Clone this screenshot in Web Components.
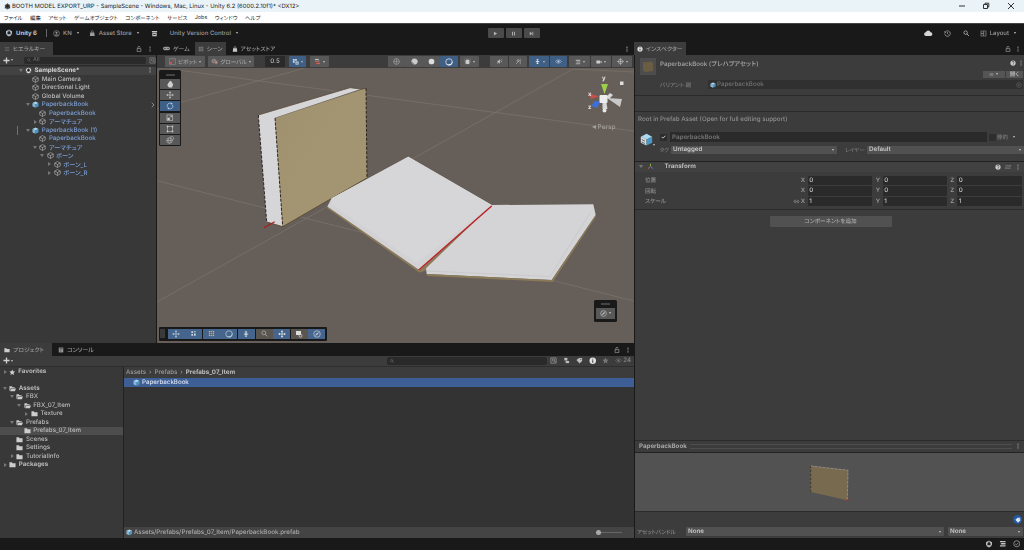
<!doctype html>
<html lang="ja"><head><meta charset="utf-8"><title>Unity</title>
<style>
html,body{margin:0;padding:0;background:#191919}
body{width:1024px;height:550px;overflow:hidden;font:500 6.2px Inter,"Noto Sans CJK JP",sans-serif;color:#bdbdbd;font-feature-settings:"palt";text-rendering:geometricPrecision}
</style></head><body>
<u-app></u-app>
<script>
const S='fill="none" stroke="currentColor"';
const ICONS={
cube:`<path d="M8 1.3 14.3 4.7v6.6L8 14.7 1.7 11.3V4.7zM1.7 4.7 8 8l6.3-3.3M8 8v6.7" ${S} stroke-width="1.4" stroke-linejoin="round"/>`,
prefab:`<path d="M8 1 15 4.5 8 8 1 4.5z" fill="#a9d8ef"/><path d="M1 4.5 8 8v7.5L1 12z" fill="#8bb9d3"/><path d="M15 4.5 8 8v7.5l7-3.5z" fill="#4c97c4"/>`,
prefabv:`<path d="M8 1 15 4.5 8 8 1 4.5z" fill="#a9d8ef"/><path d="M1 4.5 8 8v7.5L1 12z" fill="#d6dde2"/><path d="M15 4.5 8 8v7.5l7-3.5z" fill="#4c97c4"/><path d="M2 8l4 2M2 11l4 2" stroke="#444"/>`,
logo:`<path d="M8 1 14 4.5v7L8 15 2 11.5v-7z" fill="currentColor"/><path d="M8 4l3 1.8v3.6L8 11 5 9.4V5.8z" fill="#222"/><path d="M8 1v3M2 11.5l3-2M14 11.5l-3-2" stroke="#222" stroke-width="1.2"/>`,
account:`<circle cx="8" cy="8" r="6.5" ${S} stroke-width="1.4"/><circle cx="8" cy="6.5" r="2.3" fill="currentColor"/><path d="M3.5 12.5c1-3 8-3 9 0" fill="currentColor"/>`,
bag:`<path d="M3 6h10l1 9H2z" fill="currentColor"/><path d="M5.5 7V4a2.5 2.5 0 0 1 5 0v3" ${S} stroke-width="1.4"/>`,
shop:`<path d="M2 2h12v3H2zM3 6.5h10V14H3z" fill="currentColor"/><path d="M5 9h6v2H5z" fill="#191919"/>`,
cloud:`<path d="M4 13a3.5 3.5 0 0 1-.5-7A4.8 4.8 0 0 1 12.5 6 3.5 3.5 0 0 1 12 13z" fill="currentColor"/>`,
history:`<path d="M3 4.5A6.3 6.3 0 1 1 1.8 8" ${S} stroke-width="1.4"/><path d="M1 2l.5 4 4-.5z" fill="currentColor"/><path d="M8 4.5V8.5l2.5 1.5" ${S} stroke-width="1.3"/>`,
search:`<circle cx="6.5" cy="6.5" r="4.3" ${S} stroke-width="1.8"/><path d="M10 10l4.5 4.5" ${S} stroke-width="2.2"/>`,
layout:`<path d="M1.5 1.5h13v13h-13z" fill="#888"/><path d="M3 3h4.5v4.5H3zM9 3h4v10H9zM3 9h4.5v4H3z" fill="#2a2a2a"/>`,
list:`<path d="M2 3h12v1.5H2zM2 7h12v1.5H2zM2 11h12v1.5H2z" fill="currentColor"/>`,
lock:`<path d="M3 7h10v8H3z" ${S} stroke-width="1.6"/><path d="M5 7V4a3 3 0 0 1 6 0" ${S} stroke-width="1.6"/>`,
dots:`<circle cx="8" cy="3" r="1.5" fill="currentColor"/><circle cx="8" cy="8" r="1.5" fill="currentColor"/><circle cx="8" cy="13" r="1.5" fill="currentColor"/>`,
plus:`<path d="M6.5 1h3v5.5H15v3H9.5V15h-3V9.5H1v-3h5.500z" fill="currentColor"/>`,
game:`<path d="M4 4h8a4 4 0 0 1 0 8H4a4 4 0 0 1 0-8z" fill="currentColor"/><circle cx="4.5" cy="8" r="1.3" fill="#191919"/><circle cx="11.5" cy="8" r="1.3" fill="#191919"/>`,
hash:`<path d="M2 2h12v12H2z" fill="currentColor" opacity=".75"/><path d="M6 2v12M10 2v12M2 6h12M2 10h12" stroke="#333" stroke-width="1"/>`,
info:`<circle cx="8" cy="8" r="7" fill="currentColor"/><path d="M7 3.5h2v2H7zM7 7h2v5.5H7z" fill="#2d2d2d"/>`,
help:`<circle cx="8" cy="8" r="7" fill="currentColor"/><path d="M5.500 6a2.500 2.500 0 1 1 3.500 2.300V10M8 11.500v1.500" fill="none" stroke="#2d2d2d" stroke-width="1.6"/>`,
folder:`<path d="M1 3h5.5L8 5h7v9H1z" fill="currentColor"/>`,
folderopen:`<path d="M1 3h5.5L8 5h5v2H4.2L2 13H1z" fill="currentColor"/><path d="M4.8 8H16l-2.5 6H2.5z" fill="currentColor"/>`,
star:`<path d="M8 1l2.1 4.700 5 .5-3.800 3.400 1.100 5L8 12l-4.400 2.600 1.100-5L.9 6.200l5-.5z" fill="currentColor"/>`,
console:`<path d="M2 1.500h12v13H2z" fill="currentColor"/><path d="M4 4h8v1.200H4zM4 7h8v1.200H4zM4 10h5v1.200H4z" fill="#191919"/>`,
hand:`<path d="M4 8V5.500a.9.9 0 0 1 1.800 0V7.500V3.200a.9.9 0 0 1 1.800 0V7V2.500a.9.9 0 0 1 1.800 0V7V3.500a.9.9 0 0 1 1.800 0V8l.9-1.800a.9.9 0 0 1 1.500.9L11.500 14H5.500L2.200 9.500A.9.9 0 0 1 3.500 8.400z" fill="currentColor"/>`,
move:`<path d="M8 .5 10.400 3.500H5.600zM8 15.500 5.600 12.500h4.800zM.5 8 3.500 5.600v4.800zM15.500 8 12.500 10.400V5.600z" fill="currentColor"/><path d="M8 3v10M3 8h10" ${S} stroke-width="1.2"/>`,
rotate:`<path d="M3 10.500A5.500 5.500 0 0 1 11 3.300" ${S} stroke-width="1.5"/><path d="M13 5.500A5.500 5.500 0 0 1 5 12.700" ${S} stroke-width="1.5"/><path d="M10 1l3.500 2L10 5.500zM6 15l-3.500-2L6 10.500z" fill="currentColor"/>`,
scale:`<path d="M2 2h12v12H2z" ${S} stroke-width="1.2"/><path d="M3 8h5v5H3z" fill="currentColor"/><path d="M8 8l4-4M9.500 4H12v2.500" ${S} stroke-width="1.3"/>`,
rect:`<path d="M3 3h10v10H3z" ${S} stroke-width="1"/><path d="M1.500 1.500h3v3h-3zM11.500 1.500h3v3h-3zM1.500 11.500h3v3h-3zM11.500 11.500h3v3h-3z" fill="currentColor"/>`,
transform:`<circle cx="7" cy="9" r="5.500" ${S} stroke-width="1"/><ellipse cx="7" cy="9" rx="2.500" ry="5.500" ${S} stroke-width=".8"/><path d="M1.500 9h11M8 2l5-1 2 2-1 5" ${S} stroke-width="1"/>`,
pivot:`<path d="M1.500 1.500h13v13h-13z" ${S} stroke-width="1.2"/><circle cx="4.500" cy="11.500" r="2.200" fill="#e2574c"/><path d="M6 10l6-6" stroke="#e2574c" stroke-width="1.3"/>`,
globe:`<circle cx="6.500" cy="7" r="5.500" fill="#888"/><path d="M3 3l3 2-1 3 2 2-1 3" stroke="#555" fill="none"/><path d="M9 6h6v8H9z" fill="#d35a4a"/><path d="M10.500 8h3v4h-3z" fill="#8fa9b8"/>`,
snap:`<path d="M2 2h4v4H2zM7 2h4v4H7zM2 7h4v4H2z" fill="currentColor"/><path d="M8 8h7v7H8z" fill="currentColor"/><path d="M10 10h3v3h-3z" fill="#3f5f85"/>`,
snap2:`<path d="M2 2h9v3H2z" fill="currentColor"/><path d="M2 7h7v2H2z" fill="#e2574c"/><path d="M5 11h9v3H5z" fill="#e2574c"/><path d="M11 4v6" ${S}/>`,
wire:`<circle cx="8" cy="8" r="6.500" ${S} stroke-width="1.2"/><path d="M1.500 8h13M8 1.500v13" ${S} stroke-width="1"/>`,
shadeda:`<circle cx="8" cy="8" r="6.500" ${S} stroke-width="1.2"/><path d="M8 1.500a6.500 6.500 0 0 0-6.500 6.500L8 14.500a6.500 6.500 0 0 0 5-11z" fill="currentColor"/>`,
sphere:`<circle cx="8" cy="8" r="6.500" fill="currentColor"/>`,
crescent:`<circle cx="8" cy="8" r="6.500" ${S} stroke-width="1.3"/><path d="M3 11A6.500 6.500 0 0 0 14 5 6 6 0 0 1 3 11z" fill="currentColor"/>`,
bug:`<ellipse cx="8" cy="9" rx="4.500" ry="5.500" fill="currentColor"/><path d="M1 4l3 2.500M15 4l-3 2.500M1 9h3M15 9h-3M2 14l3-2M14 14l-3-2M6 3l-1-2M10 3l1-2" ${S}/>`,
noaudio:`<path d="M3 6h2.500L9 3v10l-3.500-3H3z" fill="currentColor"/><path d="M2 14 14 2M11 6l3 4M14 6l-3 4" ${S}/>`,
nofx:`<path d="M2 14 10 6M7 3l1 2 2 1-2 1-1 2-1-2-2-1 2-1zM12 2v12" ${S} stroke-width="1.3"/>`,
layers:`<path d="M8 2l3 2-3 2-3-2z M3 8l5 3 5-3-5-2z M5 12l3 2 3-2-3-1z" fill="currentColor"/>`,
eye:`<path d="M1 8c3-5 11-5 14 0-3 5-11 5-14 0z" ${S} stroke-width="1.2"/><circle cx="8" cy="8" r="2.500" fill="currentColor"/>`,
cam:`<path d="M1 4h10v8H1zM12 6.500l3-2v7l-3-2z" fill="currentColor"/>`,
gizmo:`<circle cx="8" cy="8" r="5" ${S} stroke-width="1.3"/><path d="M8 0v16M0 8h16" ${S} stroke-width="1.1"/><circle cx="8" cy="8" r="1.600" fill="currentColor"/>`,
cam2:`<path d="M2 2h10v8H2z" fill="currentColor"/><circle cx="11" cy="11.500" r="3" ${S} stroke-width="1.4"/>`,
compass:`<circle cx="8" cy="8" r="6.500" ${S} stroke-width="1.4"/><path d="M12 4 9.200 9.200 4 12l2.800-5.200z" fill="currentColor"/>`,
nodes:`<path d="M3 3h4v4H3zM9 3h4v2H9zM3 9h4v4H3zM9 8h4v5H9z" fill="currentColor"/>`,
lines:`<path d="M2 2h12v3H2zM4 6.500h10v3H4zM2 11h12v3H2z" fill="currentColor"/>`,
mag:`<circle cx="6.500" cy="6.500" r="4.500" ${S} stroke-width="1.5"/><path d="M10 10l4.500 4.500" ${S} stroke-width="1.8"/>`,
searchbox:`<path d="M2 2h12v12H2z" ${S} stroke-width="1.2"/><circle cx="8" cy="7" r="2.700" ${S} stroke-width="1.2"/><path d="M10 9l3 3" ${S} stroke-width="1.4"/>`,
people:`<path d="M3 2h7v6H3z" fill="currentColor"/><path d="M6 9h8v5H6z" fill="currentColor"/>`,
tag:`<path d="M1 7 7 2h7v7l-6 6z" fill="currentColor"/><circle cx="11" cy="5" r="1.200" fill="#333"/>`,
check:`<circle cx="8" cy="8" r="6.500" ${S} stroke-width="1.3"/><path d="M4.800 8.300 7.200 10.600 11.300 5.800" ${S} stroke-width="1.3"/>`,
axes:`<path d="M8 8V2" stroke="#8cc63f" stroke-width="2"/><path d="M8 8 2 13" stroke="#e2574c" stroke-width="2"/><path d="M8 8l6 5" stroke="#4e86d8" stroke-width="2"/>`,
sliders:`<path d="M1 5h12M13 2.500 15.500 5 13 7.500M15 11H3M3 8.500.5 11 3 13.500" ${S} stroke-width="1.5"/>`,
link:`<path d="M7 5.500a3 3 0 1 0 0 5M9 5.500a3 3 0 1 1 0 5M5 8h6" ${S} stroke-width="1.4"/>`,
target:`<circle cx="8" cy="8" r="6.500" ${S} stroke-width="1.2"/><circle cx="8" cy="8" r="2" fill="currentColor"/>`,
play:`<path d="M3 2l10 6-10 6z" fill="currentColor"/>`,
pause:`<path d="M3.500 2h3v12h-3zM9.500 2h3v12h-3z" fill="currentColor"/>`,
step:`<path d="M2.500 2l8 6-8 6zM11 2h2.500v12H11z" fill="currentColor"/>`
};
function def(name,html){customElements.define(name,class extends HTMLElement{
 connectedCallback(){ if(this.shadowRoot) return; const r=this.attachShadow({mode:'open'}); r.innerHTML=typeof html==='function'?html(this):html;} });}
const A=(el,n,d='')=>el.getAttribute(n)??d;

def('u-icon',e=>{const s=A(e,'size','7');return `<style>:host{display:inline-flex;flex:none;width:${s}px;height:${s}px;color:${A(e,'color','inherit')}}svg{width:100%;height:100%;display:block}</style><svg viewBox="0 0 16 16">${ICONS[A(e,'name')]||''}</svg>`});

def('u-caret',e=>`<style>:host{display:inline-block;flex:none;width:0;height:0;border-left:${A(e,'s','1.8')}px solid transparent;border-right:${A(e,'s','1.8')}px solid transparent;border-top:${+A(e,'s','1.8')*1.15}px solid ${A(e,'color','#c4c4c4')}}</style>`);

def('u-titlebar',`<style>:host{display:flex;align-items:center;height:12px;background:#eaf3f8;color:#222;font-size:5.9px;font-weight:400;padding-left:4px;box-sizing:border-box}
.t{margin-left:1px;flex:1;white-space:nowrap}.w{display:flex;gap:0;margin-right:1px;color:#333}.w span{width:24.5px;display:flex;justify-content:center}</style>
<u-icon name="logo" size="7" color="#555"></u-icon><span class="t">BOOTH MODEL EXPORT_URP - SampleScene - Windows, Mac, Linux - Unity 6.2 (6000.2.10f1)* &lt;DX12&gt;</span>
<div class="w"><span><svg width="8" height="8" viewBox="0 0 8 8"><path d="M1 4h6" stroke="#333"/></svg></span><span><svg width="8" height="8" viewBox="0 0 8 8"><path d="M1.500 2.500h4v4h-4zM3 2.500V1.200h3.800V5H5.500" fill="none" stroke="#333"/></svg></span><span><svg width="8" height="8" viewBox="0 0 8 8"><path d="M1 1l6 6M7 1 1 7" stroke="#333"/></svg></span></div>`);

def('u-menubar',`<style>:host{display:flex;align-items:center;gap:7.4px;height:11px;background:#fff;color:#222;font-size:5.4px;font-weight:400;padding-left:4px;box-sizing:border-box}</style>
<span>ファイル</span><span>編集</span><span>アセット</span><span>ゲームオブジェクト</span><span>コンポーネント</span><span>サービス</span><span>Jobs</span><span>ウィンドウ</span><span>ヘルプ</span>`);

def('u-toolbar',`<style>:host{display:grid;grid-template-columns:1fr auto 1fr;align-items:center;height:19px;background:#191919;color:#9d9d9d;font-size:6px;box-sizing:border-box;border-top:1px solid #444}
.l,.r{display:flex;align-items:center}.l{padding-left:5px}.r{justify-content:flex-end;padding-right:8px}
b{color:#c8c8c8;font-weight:700;margin-left:3px}.sep{width:1px;height:8px;background:#666;margin:0 6px 0 9px}
.i{display:flex;align-items:center;gap:3px}.i u-caret{margin-left:2px}
.c{display:flex;gap:2px;margin-left:3px}.c span{width:16px;height:10.5px;background:#4a4a4a;display:flex;align-items:center;justify-content:center;color:#b5b5b5;border-radius:1px}</style>
<div class="l"><u-icon name="logo" size="8" color="#b5c0cc"></u-icon><b>Unity 6</b><span class="sep"></span>
<span class="i"><u-icon name="account" size="7"></u-icon>KN<u-caret></u-caret></span>
<span class="i" style="margin-left:10.5px"><u-icon name="bag" size="6.5"></u-icon>Asset Store<u-caret></u-caret></span>
<u-icon name="shop" size="7" style="margin-left:12px" color="#c8c8c8"></u-icon>
<span class="i" style="margin-left:12px">Unity Version Control<u-caret></u-caret></span></div>
<div class="c"><span><u-icon name="play" size="5"></u-icon></span><span><u-icon name="pause" size="5"></u-icon></span><span><u-icon name="step" size="5"></u-icon></span></div>
<div class="r"><u-icon name="cloud" size="8.5" color="#d6d6d6"></u-icon><u-icon name="history" size="7" style="margin-left:11px" color="#c0c0c0"></u-icon><u-icon name="search" size="6.5" style="margin-left:12.5px" color="#c0c0c0"></u-icon><u-icon name="layout" size="7" style="margin-left:10px"></u-icon><span class="i" style="margin-left:3px">Layout<u-caret></u-caret></span></div>`);

def('u-tab',e=>`<style>:host{display:flex;align-items:center;gap:3px;height:100%;padding:0 ${A(e,'pr',A(e,'pad','5'))}px 0 ${A(e,'pad','5')}px;box-sizing:border-box;font-size:5.8px;color:#9a9a9a;flex:none;${e.hasAttribute('active')?'background:#3c3c3c;':''}}</style><slot></slot>`);

def('u-tabbar',`<style>:host{display:flex;align-items:stretch;height:13px;background:#191919;color:#aaa;flex:none}.e{margin-left:auto;display:flex;align-items:center;gap:3px;padding-right:3px}</style><slot></slot><div class="e"><slot name="end"></slot></div>`);

def('u-row',e=>{const d=+A(e,'d','0'),a=A(e,'a'),base=+A(e,'base','34.7')+d*7.2,ic=A(e,'icon','cube');
 const arrow=a?(a==='d'?`<i style="border-left:2.1px solid transparent;border-right:2.1px solid transparent;border-top:3.5px solid #777"></i>`:`<i style="border-top:2.1px solid transparent;border-bottom:2.1px solid transparent;border-left:3.5px solid #777"></i>`):'';
 return `<style>:host{display:flex;align-items:center;height:8.5px;color:${A(e,'color','inherit')};white-space:nowrap}
 .a{width:6px;margin-left:${base-17}px;display:flex;justify-content:center;flex:none}i{display:block}
 .t{margin-left:2.5px}${e.hasAttribute('bold')?'.t{font-weight:700}':''}</style>
 <span class="a">${arrow}</span><u-icon name="${ic}" size="${A(e,'size','7')}" style="margin-left:1.3px;color:${A(e,'ic','#b9b9b9')}"></u-icon><span class="t"><slot></slot></span>`});

def('u-hierarchy',`<style>:host{display:flex;flex-direction:column;width:156px;background:#383838;flex:none;border-right:1px solid #191919;position:relative;color:#bdbdbd}
.b{display:flex;align-items:center;height:11px;background:#3c3c3c;padding-left:3px;gap:1px;box-sizing:border-box;flex:none;border-bottom:1px solid #2a2a2a}
.s{margin-left:10px;width:130px;height:7px;background:#2a2a2a;border-radius:2px;display:flex;align-items:center;padding-left:3px;color:#666;font-size:5.5px;box-sizing:border-box;gap:2px}
.ind{position:absolute;left:17px;top:84px;width:1px;height:9px;background:#2c82c4}</style>
<u-tabbar><u-tab active pad="4" pr="8"><u-icon name="list" size="6" color="#777"></u-icon>ヒエラルキー</u-tab><u-icon slot="end" name="lock" size="6" color="#b0b0b0"></u-icon><u-icon slot="end" name="dots" size="6" color="#b0b0b0" style="margin-left:2px"></u-icon></u-tabbar>
<div class="b"><u-icon name="plus" size="7" color="#d0d0d0"></u-icon><u-caret></u-caret><div class="s"><u-icon name="search" size="4" color="#777"></u-icon>All</div><u-icon name="searchbox" size="7" color="#999" style="margin-left:2px"></u-icon></div>
<div style="padding-top:.5px">
<u-row a="d" icon="logo" bold style="background:#424242;color:#d2d2d2" ic="#d8d8d8">SampleScene*</u-row>
<u-row d="1">Main Camera</u-row>
<u-row d="1">Directional Light</u-row>
<u-row d="1">Global Volume</u-row>
<u-row d="1" a="d" icon="prefab" color="#7c9fd4">PaperbackBook</u-row>
<u-row d="2" color="#7c9fd4">PaperbackBook</u-row>
<u-row d="2" a="r" color="#7c9fd4">アーマチュア</u-row>
<u-row d="1" a="d" icon="prefab" color="#7c9fd4">PaperbackBook (1)</u-row>
<u-row d="2" color="#7c9fd4">PaperbackBook</u-row>
<u-row d="2" a="d" color="#7c9fd4">アーマチュア</u-row>
<u-row d="3" a="d" color="#7c9fd4">ボーン</u-row>
<u-row d="4" a="r" color="#7c9fd4">ボーン_L</u-row>
<u-row d="4" a="r" color="#7c9fd4">ボーン_R</u-row>
</div><span class="ind"></span>
<svg style="position:absolute;left:151px;top:60px" width="4" height="6" viewBox="0 0 4 6"><path d="M.7.7 3 3 .7 5.3" fill="none" stroke="#888"/></svg>
<u-icon name="dots" size="6" color="#c0c0c0" style="position:absolute;left:147px;top:25px"></u-icon>`);

def('u-tb',e=>{const b=e.hasAttribute('blue'),ar=e.hasAttribute('arrow');return `<style>:host{display:flex;align-items:center;justify-content:center;gap:2px;height:10.5px;width:${A(e,'w','18')}px;background:${b?'#3f5f85':'#585858'};flex:none;box-sizing:border-box;border-radius:1px;font-size:5.6px;color:#a0a0a0;white-space:nowrap}</style><slot></slot>${ar?'<u-caret color="#bbb"></u-caret>':''}`});

def('u-scene',`<style>:host{display:flex;flex-direction:column;flex:1;min-width:0;background:#191919;position:relative}
.bar{display:flex;align-items:center;height:13px;background:#3c3c3c;flex:none;padding-left:8px;padding-right:2px;box-sizing:border-box;color:#cfcfcf}
.g{display:flex;align-items:center}
.vp{flex:1;position:relative;background:#665f59;overflow:hidden}
svg.world{display:block;width:100%;height:100%}
.tools{position:absolute;left:2px;top:2px;width:22px;display:flex;flex-direction:column;align-items:center;gap:1.3px;background:#191919;padding:1px 0;border-radius:1.5px;box-sizing:border-box}
.h{width:9px;height:2px;margin:3px 0 1.5px;background:#444}
.t{width:20px;height:10px;background:#585858;display:flex;align-items:center;justify-content:center;color:#d0d0d0}.t.on{background:#3f5f85;color:#a8d0ff}
.bot{position:absolute;left:1.5px;bottom:2.5px;height:13.5px;display:flex;align-items:center;gap:.6px;background:#191919;padding:0 1.5px;border-radius:1px;box-sizing:border-box}
.bot i{display:block;width:5px;height:9px;background:#3a3a3a;margin-right:2px}
.bot .t{width:17px;height:10.5px;background:#46658c;color:#c8d4de}.bot .t.off{background:#5b5550;color:#bbb}
.cor{position:absolute;left:437px;top:231.5px;width:23px;height:22.5px;background:#191919;border-radius:1.5px;display:flex;flex-direction:column;align-items:center;box-sizing:border-box;padding-top:3.5px}
.cor .h{margin:0 0 3px;height:2px;width:9px}
.cor .t{width:19px;height:10.5px;gap:2px}
.p{position:absolute;left:435px;top:55px;font-size:6.5px;color:#a5a19d;display:flex;gap:1.5px;align-items:center}
.p i{display:block;border-top:2.2px solid transparent;border-bottom:2.2px solid transparent;border-right:4px solid #a5a19d}
.lbl{position:absolute;font-size:6px;font-weight:700;color:#e4e4e4}</style>
<u-tabbar>
<u-tab pad="3" style="margin-left:3px"><u-icon name="game" size="7"></u-icon>ゲーム</u-tab>
<u-tab active pad="3" style="margin-left:2px"><u-icon name="hash" size="6"></u-icon>シーン</u-tab>
<u-tab pad="3" style="margin-left:3px"><u-icon name="bag" size="6" color="#c8c8c8"></u-icon>アセットストア</u-tab>
<u-icon slot="end" name="dots" size="6" style="margin-right:1px;color:#c4c4c4"></u-icon>
</u-tabbar>
<div class="bar">
<u-tb w="40" arrow><u-icon name="pivot" size="7"></u-icon>ピボット</u-tb>
<u-tb w="46" arrow style="margin-left:3px"><u-icon name="globe" size="7"></u-icon>グローバル</u-tb>
<u-tb w="20" style="margin-left:11px;background:#2a2a2a;color:#bbb;font-size:6.2px">0.5</u-tb>
<u-tb w="17" blue arrow style="margin-left:4px"><u-icon name="snap" size="7" color="#cfdcea"></u-icon></u-tb>
<u-tb w="19" arrow style="margin-left:4px"><u-icon name="snap2" size="7" color="#bbb"></u-icon></u-tb>
<div class="g" style="margin-left:auto">
<u-tb w="17"><u-icon name="wire" size="7" color="#bbb"></u-icon></u-tb><u-tb w="18"><u-icon name="shadeda" size="7" color="#ccc"></u-icon></u-tb><u-tb w="17"><u-icon name="sphere" size="7" color="#ddd"></u-icon></u-tb><u-tb w="18" blue><u-icon name="crescent" size="8" color="#fff"></u-icon></u-tb><u-tb w="19" arrow style="margin-left:2px"><u-icon name="bug" size="7" color="#ccc"></u-icon></u-tb>
<u-tb w="18" style="margin-left:11px"><u-icon name="noaudio" size="7" color="#bbb"></u-icon></u-tb><u-tb w="18" style="margin-left:1px"><u-icon name="nofx" size="7" color="#bbb"></u-icon></u-tb>
<u-tb w="20" blue arrow style="margin-left:2px"><u-icon name="layers" size="7" color="#d8e4f0"></u-icon></u-tb><u-tb w="17" blue style="margin-left:1px"><u-icon name="eye" size="7" color="#c4d4e8"></u-icon></u-tb>
<u-tb w="21" arrow style="margin-left:2px"><u-icon name="lines" size="6" color="#aaa"></u-icon></u-tb><u-tb w="20" arrow style="margin-left:1px"><u-icon name="cam" size="6" color="#ccc"></u-icon></u-tb><u-tb w="20" arrow style="margin-left:1px"><u-icon name="gizmo" size="7" color="#ccc"></u-icon></u-tb>
</div></div>
<div class="vp">
<svg class="world" viewBox="157 68 477 275" preserveAspectRatio="none">
<g stroke="#7b756d" stroke-width=".7" fill="none">
<path d="M157 109 305 68M170 69 634 131M158 181 634 301M157 302 573 69M573 69 634 72"/>
</g>
<path d="M258.3 115 350 87.7 360.7 89 275 117.7 282.7 226.7 266.7 222z" fill="#d6d6d8"/>
<path d="M275 118 366 88.3 367 178 282.7 226.7z" fill="#a49572"/>
<path d="M275 118 366 88.3 367 178 282.7 226.7z" fill="url(#cov)"/>
<path d="M258.3 115 350 87.7 360.7 89 366 88.3" fill="none" stroke="#5a4e3a" stroke-width=".8"/>
<path d="M258.3 115 266.7 222M275 118 282.7 226.7M366 88.3 367 178" fill="none" stroke="#1d1a16" stroke-width=".9" stroke-dasharray="3 1.5"/>
<path d="M367 178 282.7 226.7 266.7 222" fill="none" stroke="#5a4e3a" stroke-width="1"/>
<path d="M264 227.7 274.7 221.7" stroke="#a81c1c" stroke-width="1.2"/>
<path d="M327.3 208.3 419.300 272.5 425 271 491.7 205 408.3 156.7 331.7 198.3z" fill="#8b7a5a"/>
<path d="M327.3 206.5 419.3 270 491.7 205 408.3 156.7 331.7 198.3z" fill="#d2d2d4"/>
<path d="M331 204 417 263 491.7 205 408.3 156.7 331.7 198.3z" fill="#d6d6d8"/>
<path d="M426 268.3 491.7 205 593.3 204.3 595.7 215 551.7 280 426.7 274z" fill="#d4d4d6"/>
<path d="M426.7 274 551.7 280 595.7 215 595.7 217 552.7 282 427 276z" fill="#8a7a58"/>
<path d="M427 271 550 276.5 590 213" fill="none" stroke="#c6c6c8" stroke-width=".8"/>
<path d="M491.7 206 418.7 270" stroke="#c01f26" stroke-width="1.3"/>
<path d="M601 84h7l-3.500 10z" fill="#9dcf4a"/>
<path d="M589 93.5 599 96.5 591 99z" fill="#c8504a"/>
<path d="M594 101.5 600.5 101 597 108 591.5 106z" fill="#3d6fd8"/>
<path d="M607 98 622 99 620 107z" fill="#c8c8c8"/>
<path d="M606 97 610 93l3 2-4 4z" fill="#d8d8d8"/>
<path d="M602.5 103h4l1 6h-5z" fill="#d8d8d8"/>
<circle cx="604.5" cy="110.5" r="2" fill="#e8e8e8"/>
<rect x="599.5" y="95" width="8" height="8" rx="1" fill="#ececec"/>
<path d="M620 81.500h3.500v3.500H620z" fill="#ddd"/>
<defs><linearGradient id="cov" x1="0" y1="0" x2="1" y2="1"><stop offset="0" stop-color="#8c7f64" stop-opacity=".35"/><stop offset=".6" stop-color="#a49470" stop-opacity="0"/></linearGradient></defs>
</svg>
<span class="lbl" style="left:445px;top:7px">y</span><span class="lbl" style="left:431px;top:23px">x</span><span class="lbl" style="left:431px;top:36px">z</span>
<div class="p"><i></i>Persp</div>
<div class="tools"><div class="h"></div>
<div class="t"><u-icon name="hand" size="8.5"></u-icon></div><div class="t"><u-icon name="move" size="8"></u-icon></div><div class="t on"><u-icon name="rotate" size="8"></u-icon></div><div class="t"><u-icon name="scale" size="7.5"></u-icon></div><div class="t"><u-icon name="rect" size="8"></u-icon></div><div class="t"><u-icon name="transform" size="8"></u-icon></div></div>
<div class="bot"><i></i>
<div class="t"><u-icon name="move" size="8"></u-icon></div><div class="t"><u-icon name="nodes" size="7"></u-icon></div><div class="t"><u-icon name="hash" size="7"></u-icon></div><div class="t"><u-icon name="crescent" size="8"></u-icon></div><div class="t"><u-icon name="layers" size="8"></u-icon></div><div class="t off"><u-icon name="mag" size="7"></u-icon></div><div class="t"><u-icon name="move" size="8" color="#fff"></u-icon></div><div class="t off"><u-icon name="cam2" size="8" color="#ddd"></u-icon></div><div class="t"><u-icon name="compass" size="8"></u-icon></div></div>
<div class="cor"><div class="h"></div><div class="t"><u-icon name="compass" size="7"></u-icon><u-caret></u-caret></div></div>
</div>`);

def('u-project',`<style>:host{display:flex;flex-direction:column;height:195px;flex:none;background:#333;color:#b8b8b8;position:relative}
.bar{display:flex;align-items:center;height:10.5px;background:#3c3c3c;flex:none;padding-left:3px;color:#c4c4c4;box-sizing:border-box;border-bottom:1px solid #2e2e2e}
.s{margin-left:auto;width:160px;height:7.5px;background:#2a2a2a;border-radius:2px;display:flex;align-items:center;padding-left:3px;box-sizing:border-box}
.e{display:flex;align-items:center;padding-right:3px;gap:6px;margin-left:3px;color:#bdbdbd}
.body{display:flex;flex:1;min-height:0}
.tree{width:123px;flex:none;border-right:1px solid #222;background:#383838;padding-top:1px}
.gap{height:8px}
.main{flex:1;display:flex;flex-direction:column;min-width:0}
.crumb{display:flex;align-items:center;gap:3px;height:11.5px;background:#3c3c3c;padding-left:2px;color:#9a9a9a;box-sizing:border-box;flex:none;padding-top:1px}.crumb b{font-weight:700;color:#bdbdbd}
.list{flex:1}.sel{display:flex;align-items:center;height:9px;background:#3e5f96;color:#d8e2f2;padding-left:9px;gap:2px}
.foot{display:flex;align-items:center;height:11px;background:#444;padding-left:2px;gap:1.5px;color:#a8a8a8;font-size:6.2px;flex:none;position:relative}
.sl{position:absolute;left:472px;top:4.5px;width:26px;height:1px;background:#666}
.sl i{position:absolute;left:0;top:-2px;width:5px;height:5px;border-radius:50%;background:#aaa}</style>
<u-tabbar><u-tab active pad="4" pr="8"><u-icon name="folder" size="6" color="#ccc"></u-icon>プロジェクト</u-tab><u-tab pad="3" style="margin-left:3px"><u-icon name="console" size="6"></u-icon>コンソール</u-tab><u-icon slot="end" name="lock" size="6" color="#b0b0b0"></u-icon><u-icon slot="end" name="dots" size="6" color="#b0b0b0" style="margin-left:2px"></u-icon></u-tabbar>
<div class="bar"><u-icon name="plus" size="7" color="#d0d0d0"></u-icon><u-caret style="margin-left:1px"></u-caret><div class="s"><u-icon name="search" size="4" color="#888"></u-icon></div>
<div class="e"><u-icon name="searchbox" size="7"></u-icon><u-icon name="people" size="7"></u-icon><u-icon name="tag" size="7"></u-icon><u-icon name="info" size="7.5" color="#e0e0e0"></u-icon><u-icon name="star" size="7" color="#777"></u-icon><span style="display:flex;align-items:center;gap:1px;color:#888"><u-icon name="eye" size="7" color="#777"></u-icon>24</span></div></div>
<div class="body"><div class="tree">
<u-row base="19" a="r" icon="star" bold size="6.5" ic="#ccc">Favorites</u-row><div class="gap"></div>
<u-row base="19" a="d" icon="folderopen" bold ic="#ccc">Assets</u-row>
<u-row base="19" d="1" a="d" icon="folderopen" ic="#ccc">FBX</u-row>
<u-row base="19" d="2" a="d" icon="folderopen" ic="#ccc">FBX_07_Item</u-row>
<u-row base="19" d="3" a="r" icon="folder" ic="#ccc">Texture</u-row>
<u-row base="19" d="1" a="d" icon="folderopen" ic="#ccc">Prefabs</u-row>
<u-row base="19" d="2" icon="folder" ic="#ccc" style="background:#4d4d4d">Prefabs_07_Item</u-row>
<u-row base="19" d="1" icon="folder" ic="#ccc">Scenes</u-row>
<u-row base="19" d="1" icon="folder" ic="#ccc">Settings</u-row>
<u-row base="19" d="1" a="r" icon="folder" ic="#ccc">TutorialInfo</u-row>
<u-row base="19" a="r" icon="folder" bold ic="#ccc">Packages</u-row>
</div><div class="main">
<div class="crumb">Assets<span>&#8250;</span>Prefabs<span>&#8250;</span><b>Prefabs_07_Item</b></div>
<div class="list"><div class="sel"><u-icon name="prefab" size="7"></u-icon>PaperbackBook</div></div>
<div class="foot"><u-icon name="prefab" size="6.5"></u-icon>Assets/Prefabs/Prefabs_07_Item/PaperbackBook.prefab<div class="sl"><i></i></div></div>
</div></div>`);

def('u-drop',`<style>:host{display:flex;align-items:center;justify-content:space-between;height:8.5px;background:#515151;border-radius:1px;padding:0 3px 0 2px;box-sizing:border-box;color:#c6c6c6;font-size:6.2px;font-weight:600;min-width:0}</style><slot></slot><u-caret></u-caret>`);
def('u-num',`<style>:host{display:flex;align-items:center;height:9.5px;background:#2a2a2a;border-radius:1px;padding-left:1.5px;box-sizing:border-box;color:#c8c8c8;font-size:6.2px;min-width:0}</style><slot></slot>`);

def('u-inspector',`<style>:host{display:flex;flex-direction:column;flex:1;min-width:0;background:#191919;font-size:6.2px;color:#a0a0a0}
.body{flex:1;display:flex;flex-direction:column;background:#3c3c3c;min-height:0;border-left:1px solid #191919}
.hd{height:41px;flex:none;background:#3c3c3c;border-bottom:1px solid #2a2a2a;display:grid;grid-template-columns:22px 1fr;box-sizing:border-box}
.thumb{width:16px;height:17px;background:#4d4d4d;margin:3px 0 0 5px;display:flex;align-items:center;justify-content:center}
.ht{padding-top:4px;display:flex;flex-direction:column;min-width:0}
.ht .a{display:flex;align-items:center;color:#9a9a9a;font-size:6.2px;font-weight:600;padding-left:3px;height:8px;white-space:nowrap}
.ht .b{display:flex;justify-content:flex-end;margin-top:3.7px;padding-right:1px}
.btn{height:7.5px;background:#555;display:flex;align-items:center;justify-content:center;color:#999;font-size:5.6px;gap:2px}
.var{display:flex;align-items:center;margin-top:1.8px;height:9.5px;font-size:5.6px;color:#7a7a7a;padding-right:1px}
.var>span{width:51px;padding-left:3px;box-sizing:border-box;white-space:nowrap;flex:none}
.varf{flex:1;height:9.5px;background:#303030;display:flex;align-items:center;padding-left:2px;gap:1px;color:#717171;font-size:6.2px;border-radius:1px}
.strip{height:16px;border-bottom:1px solid #2a2a2a;box-sizing:border-box;flex:none}
.note{height:15px;display:flex;align-items:center;padding-left:3px;color:#8f8f8f;font-size:6.2px;flex:none;border-bottom:0;box-sizing:border-box}
.go{height:34.5px;flex:none;display:grid;grid-template-columns:24px 1fr;box-sizing:border-box;padding-top:5px;border-bottom:1px solid #222}
.gi{padding:1px 0 0 5px;position:relative}
.l1{display:flex;align-items:center;height:10px}
.ck{width:7px;height:7px;background:#2b2b2b;color:#ddd;display:flex;align-items:center;justify-content:center;flex:none;font-size:6px;border-radius:1px}
.name{width:317.5px;flex:none;height:9.7px;margin-left:2.5px;background:#2a2a2a;display:flex;align-items:center;padding-left:2.5px;color:#6f6f6f;font-weight:700;box-sizing:border-box;font-size:6.2px}
.st{display:flex;align-items:center;margin-left:1.5px;gap:2px;color:#777;font-size:5.6px}
.l2{display:flex;align-items:center;height:8.5px;margin-top:3.5px;font-size:5.4px;color:#777}
.tr{height:10.5px;display:flex;align-items:center;flex:none;background:#414141;padding-left:3px;font-weight:700;color:#bdbdbd}
.rows{padding:3px 2.3px 0 10px;height:38px;box-sizing:border-box;border-bottom:1px solid #2a2a2a;flex:none}
.rw{display:grid;grid-template-columns:1fr 8px 7px 64px 4px 7px 64.5px 3px 7px 64.5px;align-items:center;height:10.5px;color:#8e8e8e;font-size:5.6px}
.rw span.x{color:#9b9b9b;font-size:6px;font-weight:600}
.add{width:122px;height:11px;background:#515151;margin:5.5px 0 0 134.5px;display:flex;align-items:center;justify-content:center;font-size:5.6px;color:#aaa;flex:none;border-radius:1px}
.sp{flex:1}
.ph{height:10.5px;display:flex;align-items:center;flex:none;background:#3c3c3c;padding:0 3px 0 4px;color:#a5a5a5;font-weight:700;border-top:1px solid #2b2b2b;font-size:6.2px;gap:3px}
.ph i{flex:1;height:3px;border-top:1px solid #4d4d4d;border-bottom:1px solid #4d4d4d}
.pv{height:58.5px;flex:none;background:#525252;overflow:hidden;border-top:.5px solid #222}
.pv svg{display:block;width:100%;height:100%}
.bt{height:27px;flex:none;display:flex;flex-direction:column;justify-content:flex-end;border-top:1px solid #2b2b2b;box-sizing:border-box;padding:0 1.5px 2px 2px;position:relative}
.bb{display:grid;grid-template-columns:49px 258px 4px 1fr;align-items:center;height:9px;font-size:5.5px;color:#858585}
.tagb{position:absolute;right:2px;top:3px;width:9px;height:9px;border-radius:50%;background:#23589e;display:flex;align-items:center;justify-content:center}
</style>
<u-tabbar><u-tab active pad="3"><u-icon name="info" size="6" color="#ddd"></u-icon>インスペクター</u-tab><u-icon slot="end" name="lock" size="6" color="#b0b0b0"></u-icon><u-icon slot="end" name="dots" size="6" color="#b0b0b0" style="margin-left:1px"></u-icon></u-tabbar>
<div class="body">
<div class="hd"><div class="thumb"><svg width="12" height="11" viewBox="0 0 12 11"><path d="M1 1.5 9 .5l2 1.5v8L3 11 1 9.5z" fill="#6a5d42"/></svg></div>
<div class="ht"><div class="a">PaperbackBook (プレハブアセット)<u-icon name="help" size="6" color="#ccc" style="margin-left:auto;margin-right:2px"></u-icon><u-icon name="dots" size="6" color="#aaa"></u-icon></div>
<div class="b"><div class="btn" style="width:22px"><u-icon name="list" size="5"></u-icon><u-caret></u-caret></div><div class="btn" style="width:17px;margin-left:1.5px;color:#bbb">開く</div></div>
<div class="var"><span>バリアント 親</span><div class="varf"><u-icon name="prefab" size="6"></u-icon>PaperbackBook<u-icon name="target" size="6" color="#777" style="margin-left:auto;margin-right:1px"></u-icon></div></div>
</div></div>
<div class="strip"></div>
<div class="note">Root in Prefab Asset (Open for full editing support)</div>
<div class="go"><div class="gi"><u-icon name="prefabv" size="13"></u-icon><u-caret style="position:absolute;left:18px;top:12px"></u-caret></div>
<div><div class="l1"><div class="ck" style="margin-left:1px">✓</div><div class="name">PaperbackBook</div><div class="ck" style="margin-left:1.5px;background:#2e2e2e"></div><div class="st">静的<u-caret style="margin-left:3px"></u-caret></div></div>
<div class="l2"><span style="width:11px;margin-left:-1px;text-align:right">タグ</span><u-drop style="width:166px;margin-left:2px">Untagged</u-drop><span style="margin-left:8px;width:22px">レイヤー</span><u-drop style="width:156.5px">Default</u-drop></div></div></div>
<div class="tr"><i style="display:block;border-left:2.1px solid transparent;border-right:2.1px solid transparent;border-top:3.5px solid #777;margin-right:4px;margin-left:.5px"></i><u-icon name="axes" size="7"></u-icon><span style="margin-left:11px">Transform</span><span style="margin-left:auto;display:flex;gap:4px;align-items:center;padding-right:3px"><u-icon name="help" size="6" color="#ccc"></u-icon><u-icon name="sliders" size="6" color="#aaa"></u-icon><u-icon name="dots" size="6" color="#aaa"></u-icon></span></div>
<div class="rows">
<div class="rw"><span>位置</span><span></span><span class="x">X</span><u-num>0</u-num><span></span><span class="x">Y</span><u-num>0</u-num><span></span><span class="x">Z</span><u-num>0</u-num></div>
<div class="rw"><span>回転</span><span></span><span class="x">X</span><u-num>0</u-num><span></span><span class="x">Y</span><u-num>0</u-num><span></span><span class="x">Z</span><u-num>0</u-num></div>
<div class="rw"><span>スケール</span><u-icon name="link" size="7" color="#999"></u-icon><span class="x">X</span><u-num>1</u-num><span></span><span class="x">Y</span><u-num>1</u-num><span></span><span class="x">Z</span><u-num>1</u-num></div>
</div>
<div class="add">コンポーネントを追加</div>
<div class="sp"></div>
<div class="ph">PaperbackBook<i></i><u-icon name="dots" size="6" color="#aaa"></u-icon></div>
<div class="pv"><svg viewBox="635 453 389 58"><path d="M810.7 465.7 848 470 847.3 500 810.7 491.7z" fill="#786a4e"/><path d="M810.7 465.7 848 470 847.3 500" fill="none" stroke="#9d988e" stroke-width=".8" stroke-dasharray="3 1"/><path d="M810.7 465.7V491.7" fill="none" stroke="#332c20" stroke-width=".8" stroke-dasharray="2 2"/><path d="M845 501 850 498" stroke="#9b3a30"/></svg></div>
<div class="bt"><div class="tagb"><u-icon name="tag" size="6" color="#dfe9f5"></u-icon></div>
<div class="bb"><span>アセットバンドル</span><u-drop>None</u-drop><span></span><u-drop>None</u-drop></div></div>
</div>`);

def('u-statusbar',`<style>:host{display:flex;align-items:center;justify-content:flex-end;height:12px;background:#191919;gap:6px;padding-right:4px;color:#c0c0c0}</style>
<u-icon name="logo" size="8"></u-icon><u-icon name="lines" size="7.500"></u-icon><u-icon name="check" size="7.5"></u-icon>`);

def('u-app',`<style>:host{display:flex;flex-direction:column;width:1024px;height:550px;overflow:hidden;filter:blur(.3px)}
.main{flex:1;display:grid;grid-template-columns:634px 390px;min-height:0}
.left{display:flex;flex-direction:column;min-height:0}
.top{flex:1;display:flex;min-height:0}</style>
<u-titlebar></u-titlebar><u-menubar></u-menubar><u-toolbar></u-toolbar>
<div class="main"><div class="left"><div class="top"><u-hierarchy></u-hierarchy><u-scene></u-scene></div><u-project></u-project></div><u-inspector></u-inspector></div>
<u-statusbar></u-statusbar>`);
</script></body></html>
